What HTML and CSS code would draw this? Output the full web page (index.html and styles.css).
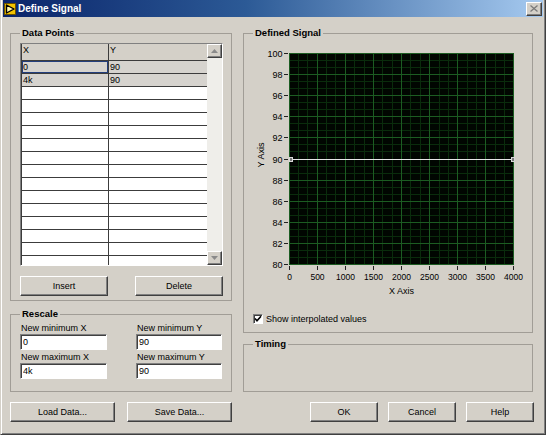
FILE: index.html
```html
<!DOCTYPE html>
<html lang="en">
<head>
    <meta charset="UTF-8">
    <title>Define Signal</title>
    <link rel="stylesheet" href="styles.css">
</head>
<body>
<div class="window">
    <div class="titlebar">
        <svg class="app-icon" width="12" height="12" viewBox="0 0 12 12">
            <rect x="0" y="0" width="12" height="12" fill="#f2c200"/>
            <rect x="0.5" y="0.5" width="11" height="11" fill="none" stroke="#6a5200"/>
            <path d="M2.5 2 L10 6 L2.5 10 Z" fill="#fff7b0" stroke="#000" stroke-width="1.4" stroke-linejoin="round"/>
        </svg>
        <span class="title">Define Signal</span>
        <span class="close">
            <svg width="8" height="7" viewBox="0 0 8 7"><path d="M0.5 0.5 L7.5 6.5 M7.5 0.5 L0.5 6.5" stroke="#7a7a7a" stroke-width="1.3"/></svg>
        </span>
    </div>

    <div class="content">
        <div class="col left">
            <fieldset class="group points">
                <legend>Data Points</legend>
                <div class="table">
                    <div class="grid">
                        <div class="row head"><span>X</span><span>Y</span></div>
                        <div class="row filled"><span class="sel">0</span><span>90</span></div>
                        <div class="row filled"><span>4k</span><span>90</span></div>
                        <div class="row"><span></span><span></span></div>
                        <div class="row"><span></span><span></span></div>
                        <div class="row"><span></span><span></span></div>
                        <div class="row"><span></span><span></span></div>
                        <div class="row"><span></span><span></span></div>
                        <div class="row"><span></span><span></span></div>
                        <div class="row"><span></span><span></span></div>
                        <div class="row"><span></span><span></span></div>
                        <div class="row"><span></span><span></span></div>
                        <div class="row"><span></span><span></span></div>
                        <div class="row"><span></span><span></span></div>
                        <div class="row"><span></span><span></span></div>
                        <div class="row"><span></span><span></span></div>
                        <div class="row"><span></span><span></span></div>
                    </div>
                    <div class="scroll">
                        <span class="sbtn"><svg width="7" height="4" viewBox="0 0 7 4"><path d="M0 4 L3.5 0 L7 4 Z" fill="#8a8a8a"/></svg></span>
                        <span class="sbtn"><svg width="7" height="4" viewBox="0 0 7 4"><path d="M0 0 L3.5 4 L7 0 Z" fill="#8a8a8a"/></svg></span>
                    </div>
                </div>
                <div class="pair">
                    <button>Insert</button>
                    <button>Delete</button>
                </div>
            </fieldset>

            <fieldset class="group rescale">
                <legend>Rescale</legend>
                <div class="fields">
                    <label class="field">New minimum X<input type="text" value="0"></label>
                    <label class="field">New minimum Y<input type="text" value="90"></label>
                    <label class="field">New maximum X<input type="text" value="4k"></label>
                    <label class="field">New maximum Y<input type="text" value="90"></label>
                </div>
            </fieldset>

            <div class="actions split">
                <button class="wide">Load Data...</button>
                <button class="wide">Save Data...</button>
            </div>
        </div>

        <div class="col right">
            <fieldset class="group signal">
                <legend>Defined Signal</legend>
                <svg class="chart" width="288" height="269" viewBox="0 0 288 269">
                    <rect x="45" y="14" width="225" height="212" fill="#010601"/>
                    <path class="minor" d="M54.5 14V226M63.5 14V226M82.5 14V226M91.5 14V226M110.5 14V226M120.5 14V226M138.5 14V226M148.5 14V226M166.5 14V226M176.5 14V226M195.5 14V226M204.5 14V226M223.5 14V226M232.5 14V226M251.5 14V226M260.5 14V226
                        M45 21.5H270M45 28.5H270M45 42.5H270M45 49.5H270M45 63.5H270M45 70.5H270M45 84.5H270M45 91.5H270M45 105.5H270M45 112.5H270M45 127.5H270M45 134.5H270M45 148.5H270M45 155.5H270M45 169.5H270M45 176.5H270M45 190.5H270M45 197.5H270M45 211.5H270M45 218.5H270"/>
                    <path class="major" d="M45.5 14V226M73.5 14V226M101.5 14V226M129.5 14V226M157.5 14V226M185.5 14V226M213.5 14V226M241.5 14V226M269.5 14V226
                        M45 14.5H270M45 35.5H270M45 56.5H270M45 77.5H270M45 98.5H270M45 141.5H270M45 162.5H270M45 183.5H270M45 204.5H270M45 225.5H270"/>
                    <path class="ticks" d="M40 14.5H44M40 35.5H44M40 56.5H44M40 77.5H44M40 98.5H44M40 120.5H44M40 141.5H44M40 162.5H44M40 183.5H44M40 204.5H44M40 225.5H44
                        M45.5 227V231M73.5 227V231M101.5 227V231M129.5 227V231M157.5 227V231M185.5 227V231M213.5 227V231M241.5 227V231M269.5 227V231"/>
                    <path d="M45 120.5H270" stroke="#e6e6e6" stroke-width="1"/>
                    <rect x="45.5" y="118.5" width="3" height="4" fill="#777" stroke="#d8d8d8"/>
                    <rect x="267.5" y="118.5" width="3" height="4" fill="#777" stroke="#d8d8d8"/>

                    <g class="ylabels" text-anchor="end">
                        <text x="38.5" y="17.5">100</text>
                        <text x="38.5" y="38.5">98</text>
                        <text x="38.5" y="59.5">96</text>
                        <text x="38.5" y="81">94</text>
                        <text x="38.5" y="102">92</text>
                        <text x="38.5" y="123.5">90</text>
                        <text x="38.5" y="144.5">88</text>
                        <text x="38.5" y="165.5">86</text>
                        <text x="38.5" y="187">84</text>
                        <text x="38.5" y="208">82</text>
                        <text x="38.5" y="229">80</text>
                    </g>
                    <g class="xlabels" text-anchor="middle">
                        <text x="45.5" y="241">0</text>
                        <text x="73.5" y="241">500</text>
                        <text x="101.5" y="241">1000</text>
                        <text x="129.5" y="241">1500</text>
                        <text x="157.5" y="241">2000</text>
                        <text x="185.5" y="241">2500</text>
                        <text x="213.5" y="241">3000</text>
                        <text x="241.5" y="241">3500</text>
                        <text x="269.5" y="241">4000</text>
                    </g>
                    <text class="axis" x="157.5" y="254.5" text-anchor="middle">X Axis</text>
                    <text class="axis" transform="translate(20 116) rotate(-90)" text-anchor="middle">Y Axis</text>
                </svg>
                <div class="check-row">
                    <span class="check">
                        <svg width="8" height="8" viewBox="0 0 8 8"><path d="M1 3.5 L3 5.8 L7 1.2" fill="none" stroke="#000" stroke-width="1.6"/></svg>
                    </span>
                    Show interpolated values
                </div>
            </fieldset>

            <fieldset class="group timing">
                <legend>Timing</legend>
                <div class="timing-body"></div>
            </fieldset>

            <div class="actions end">
                <button class="std">OK</button>
                <button class="std">Cancel</button>
                <button class="std">Help</button>
            </div>
        </div>
    </div>
</div>
</body>
</html>
```

FILE: styles.css
```css
body { margin: 0; background: #d4d0c8; font-family: "Liberation Sans", Arial, sans-serif; font-size: 9px; color: #000; }

.window { width: 546px; height: 435px; box-sizing: border-box; background: #d4d0c8; border: 1px solid; border-top: 0; border-color: #d4d0c8 #404040 #404040 #d4d0c8; box-shadow: inset 1px 0 #fff, inset -1px -1px #808080; padding: 0 2px 2px; }

.titlebar { height: 17px; display: flex; align-items: center; gap: 2px; padding: 0 1px 0 1px; background: linear-gradient(to right, #0a246a, #2c5a96 45%, #a6caf0); }
.app-icon { flex: none; }
.title { color: #fff; font-weight: bold; font-size: 10px; }
.close { margin-left: auto; width: 16px; height: 14px; box-sizing: border-box; display: flex; align-items: center; justify-content: center; background: #d4d0c8; border: 1px solid; border-color: #fff #404040 #404040 #fff; box-shadow: inset -1px -1px #808080; }

.content { display: flex; gap: 11px; padding: 10px 10px 0 7px; }
.col { display: flex; flex-direction: column; }
.left { width: 222px; }
.right { width: 290px; }

.group { margin: 0; padding: 0 8px 0 9px; border: 1px solid #a19d96; min-width: 0; }
.group legend { font-weight: bold; font-size: 9.5px; line-height: 12px; padding: 0 2px; }

.points { padding-top: 4px; padding-bottom: 4px; }
.table { display: flex; height: 223px; box-sizing: border-box; border: 1px solid; border-color: #808080 #fff #fff #808080; }
.grid { flex: 1; overflow: hidden; border-left: 1px solid #3c3c3c; background: #fff; }
.row { display: grid; grid-template-columns: 87px 1fr; height: 13px; box-sizing: border-box; border-bottom: 1px solid #3c3c3c; }
.row span { line-height: 12px; padding-left: 1px; }
.row span:first-child { border-right: 1px solid #3c3c3c; }
.row.head { height: 17px; background: #d4d0c8; }
.row.head span { line-height: 13px; }
.row.filled { background: #d6d3ce; }
.row .sel { box-shadow: inset 0 0 0 1px #233e7c; }
.scroll { width: 15px; display: flex; flex-direction: column; justify-content: space-between; background: #efeeea; }
.sbtn { height: 14px; box-sizing: border-box; display: flex; align-items: center; justify-content: center; background: #d4d0c8; border: 1px solid; border-color: #fff #404040 #404040 #fff; box-shadow: inset -1px -1px #808080; }

button { font: inherit; font-size: 9px; color: #000; height: 20px; padding: 0; background: #d4d0c8; border: 1px solid; border-color: #fff #404040 #404040 #fff; box-shadow: inset -1px -1px #808080; }
.pair { display: flex; justify-content: space-between; margin-top: 10px; }
.pair button { width: 88px; }

.rescale { margin-top: 7px; padding-top: 3px; padding-bottom: 12px; }
.fields { display: grid; grid-template-columns: 88px 87px; column-gap: 28px; row-gap: 2px; }
.field { display: flex; flex-direction: column; line-height: 11px; padding-left: 1px; }
.field input { margin-left: -1px; width: 100%; height: 16px; box-sizing: border-box; font: inherit; font-size: 9px; padding: 0 2px; background: #fff; border: 1px solid; border-color: #808080 #fff #fff #808080; box-shadow: inset 1px 1px #404040; outline: none; }

.actions { display: flex; margin-top: 10px; }
.split { justify-content: space-between; }
.wide { width: 105px; }
.end { justify-content: flex-end; gap: 10px; margin-right: -1px; }
.std { width: 68px; }

.signal { padding: 0; }
.signal legend { margin-left: 9px; }
.chart { display: block; }
.chart text { font-family: "Liberation Sans", Arial, sans-serif; font-size: 9px; fill: #000; }
.chart .xlabels text { font-size: 8.5px; }
.minor { stroke: #0a2c0c; stroke-width: 1; fill: none; }
.major { stroke: #1c5c22; stroke-width: 1; fill: none; }
.ticks { stroke: #222; stroke-width: 1; fill: none; }
.check-row { display: flex; align-items: center; gap: 3px; height: 11px; padding: 5px 0 8px 9px; }
.check { width: 10px; height: 10px; box-sizing: border-box; display: flex; align-items: center; justify-content: center; background: #fff; border: 1px solid; border-color: #808080 #fff #fff #808080; box-shadow: inset 1px 1px #404040; }

.timing { margin-top: 5px; padding: 0; }
.timing legend { margin-left: 9px; }
.timing-body { height: 41px; }
```
